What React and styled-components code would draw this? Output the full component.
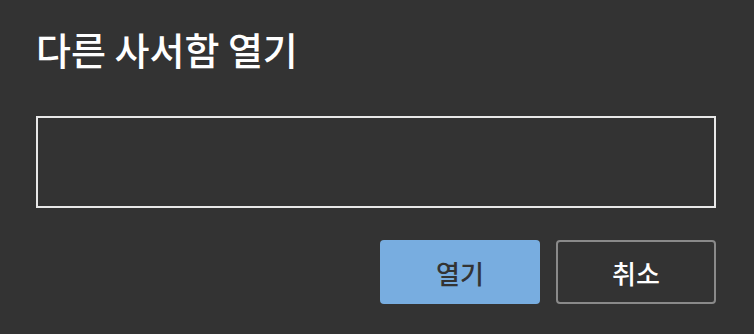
import styled, { createGlobalStyle } from 'styled-components';

const GlobalStyle = createGlobalStyle`
  html, body {
    margin: 0;
    padding: 0;
    background: #333333;
  }
  body {
    font-family: "Noto Sans CJK KR", "Noto Sans", sans-serif;
  }
`;

const Dialog = styled.div`
  box-sizing: border-box;
  width: 754px;
  height: 334px;
  padding: 24px 38px 0 36px;
  background: #333333;
  color: #ffffff;
  display: flex;
  flex-direction: column;
`;

const Title = styled.h1`
  margin: 0;
  font-size: 38px;
  font-weight: 500;
  line-height: 50px;
`;

const TextBox = styled.input`
  box-sizing: border-box;
  margin-top: 42px;
  width: 100%;
  height: 92px;
  background: transparent;
  border: 2px solid #e8e8e8;
  border-radius: 0;
  color: #ffffff;
  font-size: 20px;
  font-family: inherit;
  padding: 0 12px;
  outline: none;
`;

const Actions = styled.div`
  display: flex;
  justify-content: flex-end;
  gap: 16px;
  margin-top: 32px;
`;

const Button = styled.button`
  box-sizing: border-box;
  width: 160px;
  height: 64px;
  border-radius: 4px;
  font-family: inherit;
  font-size: 26px;
  font-weight: 500;
  cursor: pointer;
  background: ${(p) => (p.$primary ? '#78ade0' : 'transparent')};
  color: ${(p) => (p.$primary ? '#333333' : '#ffffff')};
  border: ${(p) => (p.$primary ? 'none' : '2px solid #8a8a8a')};
`;

const App = () => {
  return (
    <>
      <GlobalStyle />
      <Dialog>
        <Title>다른 사서함 열기</Title>
        <TextBox type="text" />
        <Actions>
          <Button $primary>열기</Button>
          <Button>취소</Button>
        </Actions>
      </Dialog>
    </>
  );
};

export default App;
